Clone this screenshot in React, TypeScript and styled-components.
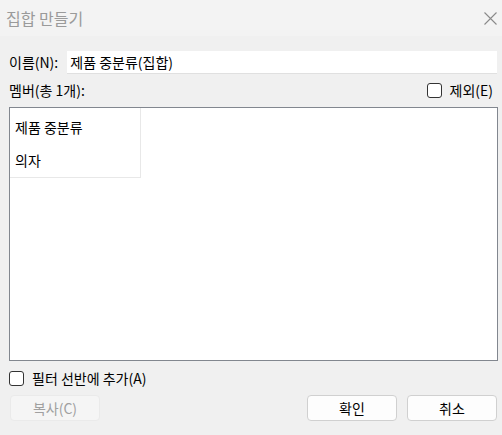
import styled, {createGlobalStyle} from 'styled-components';

const GlobalStyle = createGlobalStyle`
	html, body {
		margin: 0;
		padding: 0;
		background: #f0f0f0;
	}
	body {
		font-family: "Noto Sans CJK KR", "Noto Sans", sans-serif;
		font-size: 14px;
		color: #000;
	}
`;

function CheckBox(props: {label: string}) {
	return (
		<CheckLabel>
			<Box />
			<span>{props.label}</span>
		</CheckLabel>
	);
}

function App() {
	const members = ['제품 중분류', '의자'];

	return (
		<>
			<GlobalStyle />
			<Dialog>
				<TitleBar>
					<Title>집합 만들기</Title>
					<CloseButton>
						<svg width="13" height="13" viewBox="0 0 13 13">
							<path d="M0.5 0.5L12.5 12.5M12.5 0.5L0.5 12.5" stroke="#8a8a8a" strokeWidth="1.1" />
						</svg>
					</CloseButton>
				</TitleBar>
				<Body>
					<NameRow>
						<Label>이름(N):</Label>
						<NameInput value="제품 중분류(집합)" readOnly />
					</NameRow>
					<MemberHeader>
						<Label>멤버(총 1개):</Label>
						<CheckBox label="제외(E)" />
					</MemberHeader>
					<ListBox>
						<Column>
							{members.map((m) => (
								<Item key={m}>{m}</Item>
							))}
						</Column>
					</ListBox>
					<FilterRow>
						<CheckBox label="필터 선반에 추가(A)" />
					</FilterRow>
					<ButtonRow>
						<Button disabled>복사(C)</Button>
						<Spacer />
						<Button>확인</Button>
						<Button>취소</Button>
					</ButtonRow>
				</Body>
			</Dialog>
		</>
	);
}
export default App;

const Dialog = styled.div`
	width: 502px;
	height: 435px;
	display: flex;
	flex-direction: column;
	background: #f0f0f0;
	overflow: hidden;
`;

const TitleBar = styled.div`
	height: 36px;
	display: flex;
	align-items: center;
	justify-content: space-between;
	background: #f3f3f3;
	padding: 0 5px 0 6px;
`;

const Title = styled.span`
	font-size: 16px;
	color: #9a9a9a;
`;

const CloseButton = styled.div`
	display: flex;
	justify-content: center;
`;

const Body = styled.div`
	flex: 1;
	display: flex;
	flex-direction: column;
	padding: 14px 4px 0 9px;
`;

const NameRow = styled.div`
	display: flex;
	align-items: center;
	height: 24px;
	gap: 9px;
`;

const Label = styled.span`
	font-size: 14px;
	white-space: nowrap;
`;

const NameInput = styled.input`
	flex: 1;
	height: 23px;
	box-sizing: border-box;
	border: none;
	border-bottom: 1px solid #e0e0e0;
	background: #fff;
	font-family: inherit;
	font-size: 14px;
	padding: 0 3px;
	outline: none;
	margin-right: 1px;
`;

const MemberHeader = styled.div`
	display: flex;
	align-items: center;
	justify-content: space-between;
	height: 22px;
	margin-top: 5px;
	padding-right: 5px;
`;

const CheckLabel = styled.label`
	display: flex;
	align-items: center;
	gap: 8px;
	font-size: 14px;
`;

const Box = styled.span`
	width: 13px;
	height: 13px;
	border: 1px solid #333;
	border-radius: 3px;
	background: #fff;
`;

const ListBox = styled.div`
	height: 254px;
	margin-top: 6px;
	border: 1px solid #82878f;
	background: #fff;
	box-sizing: border-box;
	width: 489px;
`;

const Column = styled.div`
	width: 130px;
	border-right: 1px solid #e8e8e8;
	border-bottom: 1px solid #e8e8e8;
	display: flex;
	flex-direction: column;
	padding-top: 3px;
`;

const Item = styled.div`
	height: 33px;
	line-height: 33px;
	padding-left: 5px;
	font-size: 14px;
`;

const FilterRow = styled.div`
	height: 22px;
	display: flex;
	align-items: center;
	margin-top: 6px;
`;

const ButtonRow = styled.div`
	display: flex;
	align-items: center;
	gap: 10px;
	margin-top: 6px;
	padding-right: 1px;
`;

const Spacer = styled.div`
	flex: 1;
`;

const Button = styled.button`
	width: 90px;
	height: 26px;
	box-sizing: border-box;
	border: 1px solid #d0d0d0;
	border-radius: 4px;
	background: #fdfdfd;
	font-family: inherit;
	font-size: 14px;
	color: #000;
	padding: 0;
	&:first-child {
		margin-left: 1px;
	}
	&:disabled {
		background: #f5f5f5;
		border-color: #eaeaea;
		color: #a0a0a0;
	}
`;
